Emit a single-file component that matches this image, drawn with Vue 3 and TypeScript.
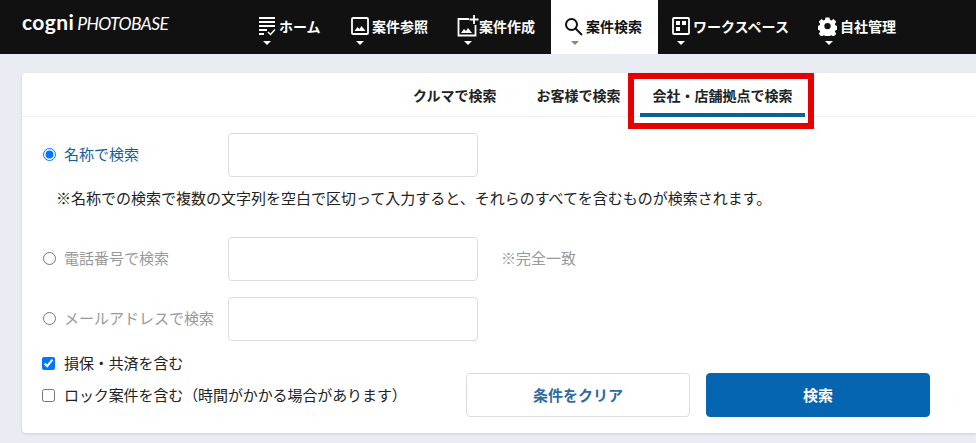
<script setup lang="ts">
const tabs = ['クルマで検索', 'お客様で検索', '会社・店舗拠点で検索'];
</script>

<template>
  <div class="page">
    <header class="header">
      <div class="logo"><span class="logo-cogni">cogni</span><span class="logo-photo">PHOTOBASE</span></div>
      <nav class="nav">
        <a class="nav-item home">
          <svg width="18" height="20" viewBox="0 0 18 20" fill="none" stroke="#fff" stroke-width="2"><path d="M1 2h16M1 6h16M1 10h16M1 14h8M1 18h5"/><path d="M10 16l2.500 2.500L17 13.500" stroke-width="1.500"/></svg>
          <span>ホーム</span><i class="caret"></i>
        </a>
        <a class="nav-item ref">
          <svg width="18" height="18" viewBox="0 0 18 18" fill="none" stroke="#fff" stroke-width="1.800"><rect x="1" y="1" width="16" height="16" rx="1"/><path d="M3.500 14l3-4 2 2 2-3 4 5z" fill="#fff" stroke="none"/></svg>
          <span>案件参照</span><i class="caret"></i>
        </a>
        <a class="nav-item make">
          <svg width="22" height="22" viewBox="0 0 22 22" fill="none" stroke="#fff" stroke-width="1.800"><path d="M12 4H1.500v16.500H18.500V10"/><path d="M17 0v9M12.500 4.500h9"/><path d="M4 18l3-4 2 2 2-3 4 5z" fill="#fff" stroke="none"/></svg>
          <span>案件作成</span><i class="caret"></i>
        </a>
        <a class="nav-item active">
          <svg width="19" height="19" viewBox="0 0 19 19" fill="none" stroke="#111" stroke-width="2"><circle cx="7.500" cy="7.500" r="5.500"/><path d="M11.500 11.500l6.500 6.500"/></svg>
          <span>案件検索</span><i class="caret"></i>
        </a>
        <a class="nav-item work">
          <svg width="18" height="18" viewBox="0 0 18 18" fill="none" stroke="#fff" stroke-width="1.800"><rect x="1" y="1" width="16" height="16" rx="1"/><path d="M4 4h4v4H4zM10 4h4v4h-4zM4 10h4v4H4z" fill="#fff" stroke="none"/></svg>
          <span>ワークスペース</span><i class="caret"></i>
        </a>
        <a class="nav-item own">
          <svg width="19" height="19" viewBox="0 0 24 24" fill="#fff"><path fill-rule="evenodd" d="M9.500 1h5l.6 3.100 1.900.8 2.600-1.800 3.500 3.500-1.800 2.600.8 1.900 3 .6v5l-3 .6-.8 1.900 1.800 2.600-3.500 3.500-2.600-1.800-1.900.8-.6 3.100h-5l-.6-3.100-1.900-.8-2.600 1.800-3.500-3.500 1.800-2.600-.8-1.900-3-.6v-5l3-.6.8-1.900-1.800-2.600 3.500-3.500 2.600 1.800 1.900-.8zM12 8a4 4 0 1 0 0 8 4 4 0 0 0 0-8z" transform="translate(0 -.5)"/></svg>
          <span>自社管理</span><i class="caret"></i>
        </a>
      </nav>
    </header>

    <main class="card">
      <div class="tabs">
        <button v-for="(t, i) in tabs" :key="t" class="tab" :class="{ current: i === 2 }">{{ t }}</button>
      </div>
      <form class="form" @submit.prevent>
        <div class="row">
          <label class="radio on"><input type="radio" name="mode" checked />名称で検索</label>
          <input class="field" type="text" />
        </div>
        <p class="note">※名称での検索で複数の文字列を空白で区切って入力すると、それらのすべてを含むものが検索されます。</p>
        <div class="row">
          <label class="radio"><input type="radio" name="mode" />電話番号で検索</label>
          <input class="field" type="text" />
          <span class="hint">※完全一致</span>
        </div>
        <div class="row mail">
          <label class="radio"><input type="radio" name="mode" />メールアドレスで検索</label>
          <input class="field" type="text" />
        </div>
        <div class="bottom">
          <div class="checks">
            <label class="check"><input type="checkbox" checked />損保・共済を含む</label>
            <label class="check"><input type="checkbox" />ロック案件を含む（時間がかかる場合があります）</label>
          </div>
          <div class="buttons">
            <button class="btn clear" type="button">条件をクリア</button>
            <button class="btn search" type="submit">検索</button>
          </div>
        </div>
      </form>
    </main>
    <div class="annotation"></div>
  </div>
</template>

<style>
html, body { margin: 0; background: #e9ecf2; overflow: hidden; }
</style>

<style scoped>
.page {
  position: relative;
  width: 976px;
  height: 443px;
  overflow: hidden;
  background: #e9ecf2;
  font-family: "Noto Sans CJK JP", "Noto Sans", sans-serif;
  color: #222;
}
.header {
  display: flex;
  height: 54px;
  background: #111;
}
.logo {
  display: flex;
  align-items: baseline;
  width: 258px;
  box-sizing: border-box;
  padding: 9px 0 0 22px;
  color: #fff;
  height: 40px;
  flex: none;
}
.logo-cogni { font: 700 21px/26px "Lato", sans-serif; letter-spacing: 0.4px; }
.logo-photo { font: italic 400 17.500px/26px "Lato", sans-serif; margin-left: 3px; letter-spacing: -0.6px; }
.nav { display: flex; align-items: stretch; }
.nav-item {
  position: relative;
  display: flex;
  align-items: center;
  gap: 3px;
  font-size: 14px;
  font-weight: 700;
  color: #fff;
  line-height: 20px;
  padding-bottom: 2px;
  box-sizing: border-box;
}
.nav-item svg { flex: none; }
.nav-item.home { width: 93px; }
.nav-item.ref { width: 106px; }
.nav-item.make { width: 94px; }
.nav-item.make span { margin-left: -3px; }
.nav-item.active { width: 107px; padding-left: 13px; background: #fff; color: #111; }
.nav-item.work { width: 160px; padding-left: 14px; }
.nav-item.own { gap: 3px; }
.caret {
  position: absolute;
  left: 5px;
  top: 41px;
  border: 4.500px solid transparent;
  border-top: 4px solid #fff;
  border-bottom: 0;
}
.nav-item.make .caret { left: 7px; }
.nav-item.active .caret { left: 20px; border-top-color: #888; }
.nav-item.work .caret { left: 19px; }
.nav-item.own .caret { left: 7px; }
.card {
  margin: 19px 0 0 22px;
  height: 360px;
  background: #fff;
  border-radius: 4px 0 0 4px;
  box-shadow: 0 1px 3px rgba(0, 0, 0, 0.12);
  display: flex;
  flex-direction: column;
}
.tabs {
  display: flex;
  justify-content: flex-start;
  height: 43px;
  padding-left: 371px;
  border-bottom: 1px solid #eee;
  flex: none;
}
.tab {
  position: relative;
  height: 44px;
  border: 0;
  background: none;
  padding: 0 20px;
  font: 700 14px/20px "Noto Sans CJK JP", sans-serif;
  color: #222;
  white-space: nowrap;
}
.tab:nth-child(2) { padding-right: 19px; }
.tab.current { padding: 0 12px 0 13px; }
.tab.current::after {
  content: "";
  position: absolute;
  left: 0;
  right: 0;
  bottom: 0;
  height: 4px;
  background: #0f5f98;
}
.form {
  flex: 1;
  display: flex;
  flex-direction: column;
  padding: 16px 0 16px 21px;
}
.row { display: flex; align-items: center; height: 44px; }
.radio {
  width: 185px;
  flex: none;
  display: flex;
  align-items: center;
  gap: 8px;
  font-size: 15px;
  line-height: 20px;
  color: #999;
  white-space: nowrap;
  padding-bottom: 2px;
}
.radio.on { color: #0f5f98; }
.radio input { width: 13px; height: 13px; margin: 0; accent-color: #0075ff; }
.field {
  width: 250px;
  height: 44px;
  box-sizing: border-box;
  border: 1px solid #d9dce1;
  border-radius: 4px;
  background: #fff;
  outline: 0;
}
.note {
  margin: 0;
  padding: 11px 0 0 15px;
  height: 60px;
  box-sizing: border-box;
  font-size: 15px;
  line-height: 20px;
  letter-spacing: 0;
  color: #222;
  white-space: nowrap;
  text-indent: -2px;
}
.hint { margin-left: 23px; font-size: 15px; line-height: 20px; color: #999; padding-bottom: 3px; }
.mail { margin-top: 16px; }
.bottom { display: flex; flex: 1; align-items: flex-end; }
.checks { width: 424px; flex: none; display: flex; flex-direction: column; gap: 12px; padding-bottom: 12px; box-sizing: border-box; margin-left: -1px; }
.check {
  display: flex;
  align-items: center;
  gap: 9px;
  font-size: 15px;
  line-height: 20px;
  letter-spacing: -0.1px;
  color: #222;
  white-space: nowrap;
}
.check input { width: 13px; height: 13px; margin: 0; accent-color: #0075ff; }
.buttons { display: flex; gap: 16px; }
.btn {
  width: 224px;
  height: 44px;
  border-radius: 4px;
  font: 700 15px/20px "Noto Sans CJK JP", sans-serif;
}
.clear { background: #fff; border: 1px solid #d9dce1; color: #2f6ba0; }
.search { background: #0565b0; border: 1px solid #0565b0; color: #fff; }
.annotation {
  position: absolute;
  left: 628px;
  top: 73px;
  width: 186px;
  height: 56px;
  box-sizing: border-box;
  border: 6px solid #e60000;
  pointer-events: none;
}
</style>
